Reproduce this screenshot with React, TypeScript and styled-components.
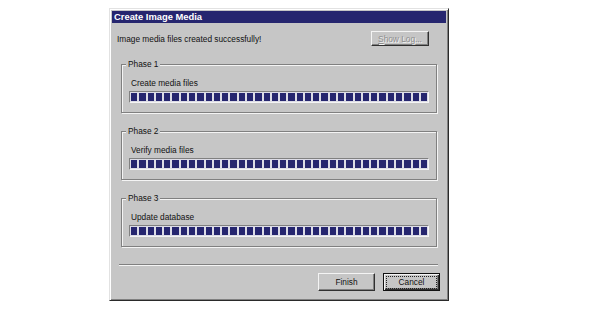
import styled, { createGlobalStyle } from "styled-components";

const face = "#c6c6c6";
const shadow = "#808080";
const light = "#f4f4f4";
const navy = "#26266f";

const GlobalStyle = createGlobalStyle`
  html, body {
    margin: 0;
    background: #ffffff;
  }
  body {
    font-family: "Liberation Sans", Arial, sans-serif;
  }
`;

const Page = styled.div`
  width: 605px;
  height: 323px;
  padding: 8px 0 0 109px;
  box-sizing: border-box;
`;

const Dialog = styled.div`
  width: 340px;
  height: 293px;
  box-sizing: border-box;
  background: ${face};
  border: 1px solid;
  border-color: #e2e2e2 #2a2a2a #2a2a2a #e2e2e2;
  box-shadow: inset 1px 1px 0 #ffffff, inset -1px -1px 0 ${shadow};
  padding: 2px;
  display: flex;
  flex-direction: column;
  font-size: 8.3px;
  color: #111;
`;

const TitleBar = styled.div`
  height: 12px;
  background: ${navy};
  color: #fff;
  font-weight: bold;
  font-size: 9.4px;
  line-height: 12px;
  padding-left: 2px;
`;

const Body = styled.div`
  flex: 1;
  display: flex;
  flex-direction: column;
`;

const TopRow = styled.div`
  display: flex;
  align-items: center;
  justify-content: space-between;
  height: 15px;
  margin-top: 8px;
  padding: 0 17px 0 5px;
`;

const Button = styled.button<{ $w?: number; $h?: number; $default?: boolean; $disabled?: boolean }>`
  width: ${(p) => p.$w ?? 57}px;
  height: ${(p) => p.$h ?? 18}px;
  box-sizing: border-box;
  margin: 0;
  padding: 0;
  background: ${face};
  font-family: inherit;
  font-size: 8.3px;
  color: ${(p) => (p.$disabled ? "#8e8e8e" : "#111")};
  text-shadow: ${(p) => (p.$disabled ? "1px 1px 0 #f2f2f2" : "none")};
  border: 1px solid;
  border-color: ${(p) =>
    p.$default ? "#111 #111 #111 #111" : `${light} #303030 #303030 ${light}`};
  box-shadow: ${(p) =>
    p.$default
      ? `inset 1px 1px 0 ${light}, inset -1px -1px 0 #303030, inset -2px -2px 0 ${shadow}`
      : `inset -1px -1px 0 ${shadow}`};
  display: flex;
  align-items: center;
  justify-content: center;
`;

const FocusRing = styled.span`
  display: flex;
  align-items: center;
  justify-content: center;
  width: 49px;
  height: 11px;
  outline: 1px dotted #222;
`;

const Groups = styled.div`
  display: flex;
  flex-direction: column;
  gap: 18px;
  margin: 18px 9px 0 9px;
`;

const Group = styled.div`
  position: relative;
  height: 49px;
  box-sizing: border-box;
  border: 1px solid ${shadow};
  box-shadow: inset 1px 1px 0 ${light}, 1px 1px 0 ${light};
  padding: 13px 7px 0 7px;
  display: flex;
  flex-direction: column;
  gap: 3px;
`;

const Legend = styled.span`
  position: absolute;
  top: -6px;
  left: 4px;
  padding: 0 2px;
  background: ${face};
  line-height: 11px;
`;

const Label = styled.div`
  line-height: 10px;
  padding-left: 2px;
`;

const Bar = styled.div`
  height: 12px;
  box-sizing: border-box;
  border: 1px solid;
  border-color: ${shadow} ${light} ${light} ${shadow};
  background: #dcdce6;
  padding: 1px;
  display: flex;
  gap: 2px;
`;

const Block = styled.div`
  flex: 1;
  background: ${navy};
`;

const Separator = styled.div`
  margin: 17px 8px 0 7px;
  border-top: 1px solid ${shadow};
  border-bottom: 1px solid ${light};
  height: 0;
`;

const ButtonRow = styled.div`
  display: flex;
  justify-content: flex-end;
  gap: 8px;
  margin-top: 7px;
  padding-right: 6px;
`;

const Underline = styled.span`
  text-decoration: underline;
`;

const phases = [
  { title: "Phase 1", label: "Create media files" },
  { title: "Phase 2", label: "Verify media files" },
  { title: "Phase 3", label: "Update database" },
];

const blocks = Array.from({ length: 36 }, (_, i) => i);

export default function App() {
  return (
    <Page>
      <GlobalStyle />
      <Dialog>
        <TitleBar>Create Image Media</TitleBar>
        <Body>
          <TopRow>
            <span>Image media files created successfully!</span>
            <Button $w={58} $h={15} $disabled>
              <Underline>S</Underline>how Log...
            </Button>
          </TopRow>
          <Groups>
            {phases.map((p) => (
              <Group key={p.title}>
                <Legend>{p.title}</Legend>
                <Label>{p.label}</Label>
                <Bar>
                  {blocks.map((b) => (
                    <Block key={b} />
                  ))}
                </Bar>
              </Group>
            ))}
          </Groups>
          <Separator />
          <ButtonRow>
            <Button>Finish</Button>
            <Button $default>
              <FocusRing>Cancel</FocusRing>
            </Button>
          </ButtonRow>
        </Body>
      </Dialog>
    </Page>
  );
}
